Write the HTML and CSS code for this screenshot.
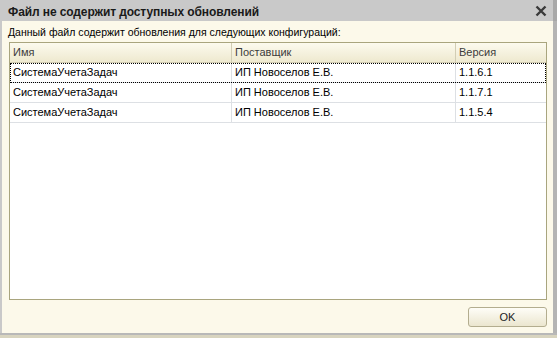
FILE: index.html
```html
<!DOCTYPE html>
<html>
<head>
<meta charset="utf-8">
<link rel="stylesheet" href="styles.css">
</head>
<body>
<div class="window">
  <div class="titlebar">
    <span class="title">Файл не содержит доступных обновлений</span>
    <svg class="close" width="12" height="12" viewBox="0 0 12 12"><path d="M1.5 1.5 L10.5 10.5 M10.5 1.5 L1.5 10.5" stroke="#3a3a3a" stroke-width="2.4" fill="none"/></svg>
  </div>
  <div class="main">
    <div class="label">Данный файл содержит обновления для следующих конфигураций:</div>
    <div class="table">
      <div class="row head">
        <div class="cell">Имя</div>
        <div class="cell">Поставщик</div>
        <div class="cell">Версия</div>
      </div>
      <div class="row selected">
        <div class="cell">СистемаУчетаЗадач</div>
        <div class="cell">ИП Новоселов Е.В.</div>
        <div class="cell">1.1.6.1</div>
      </div>
      <div class="row">
        <div class="cell">СистемаУчетаЗадач</div>
        <div class="cell">ИП Новоселов Е.В.</div>
        <div class="cell">1.1.7.1</div>
      </div>
      <div class="row">
        <div class="cell">СистемаУчетаЗадач</div>
        <div class="cell">ИП Новоселов Е.В.</div>
        <div class="cell">1.1.5.4</div>
      </div>
    </div>
    <div class="footer">
      <button class="btn">OK</button>
    </div>
  </div>
  <div class="bottom"></div>
</div>
</body>
</html>
```

FILE: styles.css
```css
html, body {
  margin: 0;
  padding: 0;
  background: #dcd8c4;
}
.window {
  width: 557px;
  height: 338px;
  display: flex;
  flex-direction: column;
  font-family: "Liberation Sans", Arial, sans-serif;
  font-size: 11px;
  color: #000;
  box-sizing: border-box;
}
.titlebar {
  height: 21px;
  flex: none;
  background: #c9c9c9;
  display: flex;
  align-items: center;
  justify-content: space-between;
  padding: 0 6px 0 8px;
  border-right: 4px solid #a8a8a8;
}
.title {
  font-weight: bold;
  font-size: 12px;
  letter-spacing: -0.1px;
  color: #1a1a1a;
  margin-top: 2px;
}
.close {
  display: block;
  margin-top: 1px;
}
.main {
  height: 312px;
  flex: none;
  background: #fcf9ea;
  border-left: 2px solid #c9c9c9;
  border-right: 4px solid #b4b4b4;
  display: flex;
  flex-direction: column;
  box-sizing: border-box;
}
.label {
  padding: 5px 0 0 6px;
  height: 17px;
  line-height: 13px;
  font-size: 10.5px;
  box-sizing: border-box;
}
.table {
  margin: 4px 6px 0 7px;
  height: 258px;
  border: 1px solid #a9a57e;
  background: #fff;
  box-sizing: border-box;
}
.row {
  display: grid;
  grid-template-columns: 222px 224px 1fr;
  height: 19px;
  border-bottom: 1px solid #dde0e4;
  box-sizing: content-box;
}
.row .cell {
  padding-left: 3px;
  line-height: 19px;
  white-space: nowrap;
  border-right: 1px solid #dde0e4;
}
.row .cell:last-child {
  border-right: none;
}
.head {
  height: 19px;
  background: linear-gradient(#fcfaee, #eee9cf);
  border-bottom: 1px solid #cfcab0;
  color: #3c3c3c;
}
.head .cell {
  border-right: 1px solid #d2cdb4;
}
.selected {
  outline: 1px dotted #000;
  outline-offset: -1px;
}
.footer {
  display: flex;
  justify-content: flex-end;
  padding: 7px 6px 0 0;
}
.btn {
  width: 79px;
  height: 20px;
  border: 1px solid #b3ad8f;
  border-radius: 3px;
  background: linear-gradient(#fefdf7, #ebe6cf);
  font-family: "Liberation Sans", Arial, sans-serif;
  font-size: 11px;
  color: #222;
  padding: 0;
}
.bottom {
  height: 5px;
  flex: none;
  border-top: 2px solid #b8b8b8;
  background: #d8d4bf;
  box-sizing: border-box;
}
```
